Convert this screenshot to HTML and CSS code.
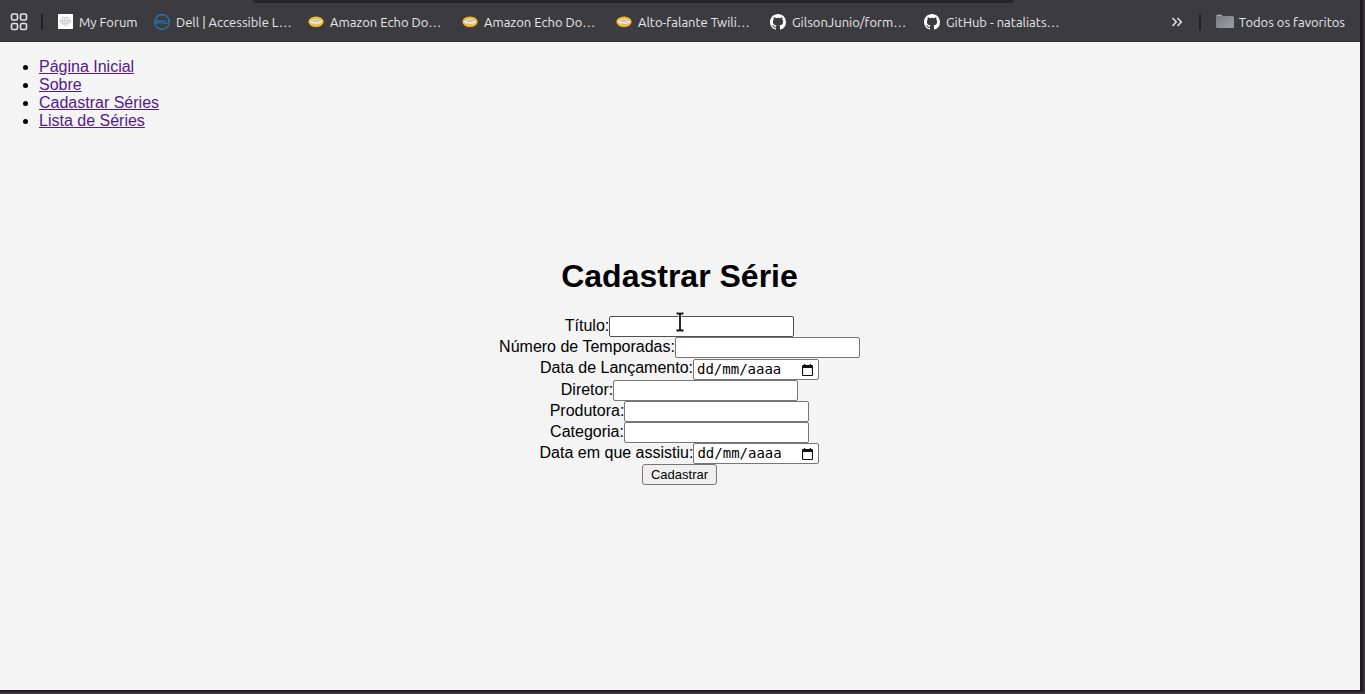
FILE: index.html
```html
<!DOCTYPE html>
<html lang="pt-BR">
<head>
<meta charset="utf-8">
<title>Cadastrar Série</title>
<link rel="stylesheet" href="styles.css">
</head>
<body>
<svg class="symbols" aria-hidden="true">
  <symbol id="handshake" viewBox="0 0 16 16">
    <ellipse cx="8" cy="8" rx="7.8" ry="5.5" fill="#4b4d57"/>
    <ellipse cx="8" cy="7.7" rx="7.6" ry="5.2" fill="#f5bd18"/>
    <path d="M1.500 6.500 5 5.600 8 5l3 .6 3.500.9-1.200 2.200-2.500 1.200L8 11l-2.600-1.100-2.600-1.200z" fill="#f2f2f4"/>
    <path d="m2.800 6.500 2.500.5L8 6.200l3 .3 2.200-.1M6 7.600l2-.4 3.500 1.800M5.200 9l2.800 1.500 1.800-.5" fill="none" stroke="#8a8c99" stroke-width=".6"/>
  </symbol>
  <symbol id="github" viewBox="0 0 16 16">
    <path fill="#fff" d="M8 0C3.58 0 0 3.58 0 8c0 3.54 2.29 6.53 5.47 7.59.4.07.55-.17.55-.38 0-.19-.01-.82-.01-1.49-2.01.37-2.53-.49-2.69-.94-.09-.23-.48-.94-.82-1.13-.28-.15-.68-.52-.01-.53.63-.01 1.08.58 1.23.82.72 1.21 1.87.87 2.33.66.07-.52.28-.87.51-1.07-1.78-.2-3.64-.89-3.64-3.95 0-.87.31-1.59.82-2.15-.08-.2-.36-1.02.08-2.12 0 0 .67-.21 2.2.82a7.6 7.6 0 0 1 4 0c1.53-1.04 2.2-.82 2.2-.82.44 1.1.16 1.92.08 2.12.51.56.82 1.27.82 2.15 0 3.07-1.87 3.75-3.65 3.95.29.25.54.73.54 1.48 0 1.07-.01 1.93-.01 2.2 0 .21.15.46.55.38A8.01 8.01 0 0 0 16 8c0-4.42-3.58-8-8-8z"/>
  </symbol>
  <symbol id="calendar" viewBox="0 0 11 12">
    <path fill="#111" d="M2 1V0h1.200v1h4.600V0H9v1h1q1 0 1 1v9q0 1-1 1H1q-1 0-1-1V2q0-1 1-1zM1.100 4v6.900h8.800V4z"/>
  </symbol>
</svg>
<div class="window">
  <header class="bookmarks">
    <button class="icon-button" aria-label="Aplicativos">
      <svg width="18" height="18" viewBox="0 0 18 18" fill="none" stroke="#e2e2e5" stroke-width="1.600"><rect x="1.500" y="1" width="6" height="6" rx="1.500"/><rect x="10.500" y="1" width="6" height="6" rx="1.500"/><rect x="1.500" y="10.500" width="6" height="6" rx="1.500"/><rect x="10.500" y="10.500" width="6" height="6" rx="1.500"/></svg>
    </button>
    <span class="divider"></span>
    <nav class="bookmark-list" aria-label="Favoritos">
      <a class="bookmark short" href="#"><svg class="icon" viewBox="0 0 16 16"><path fill="#fff" d="M0 0h16v16H0z"/><path d="M4 4h8M2 6.500h12M2 8.500h12M4 10.500h8" stroke="#8f90a0" stroke-width=".9" stroke-dasharray="1.500 .4"/><path d="M6 12.500h4" stroke="#c6c6d2" stroke-width=".7"/></svg><span>My Forum</span></a>
      <a class="bookmark" href="#"><svg class="icon" viewBox="0 0 16 16" fill="none" stroke="#2180c8"><circle cx="8" cy="8" r="7.300" stroke-width="1.200"/><path d="M2.700 6.300v3.400h1q1.500-.2 1.500-1.700t-1.500-1.700zm4.600-.2L5.200 8l2.100 2M6.300 8l1.800-1.600M6.800 9l2-1.600M9.700 6v3.600h1.700M12 6v3.600h1.700" stroke-width=".9"/></svg><span>Dell | Accessible L…</span></a>
      <a class="bookmark" href="#"><svg class="icon"><use href="#handshake"/></svg><span>Amazon Echo Do…</span></a>
      <a class="bookmark" href="#"><svg class="icon"><use href="#handshake"/></svg><span>Amazon Echo Do…</span></a>
      <a class="bookmark" href="#"><svg class="icon"><use href="#handshake"/></svg><span>Alto-falante Twili…</span></a>
      <a class="bookmark" href="#"><svg class="icon"><use href="#github"/></svg><span>GilsonJunio/form…</span></a>
      <a class="bookmark" href="#"><svg class="icon"><use href="#github"/></svg><span>GitHub - nataliats…</span></a>
    </nav>
    <button class="icon-button more" aria-label="Mais favoritos">
      <svg width="12" height="10" viewBox="0 0 12 10" fill="none" stroke="#e8e8ea" stroke-width="1.500"><path d="m1.500 1 3.800 4-3.800 4M6.500 1l3.800 4-3.800 4"/></svg>
    </button>
    <span class="divider"></span>
    <a class="bookmark all" href="#"><svg class="folder" viewBox="0 0 18 15"><defs><linearGradient id="fold" x2="1" y2="1"><stop stop-color="#77787d"/><stop offset="1" stop-color="#a0a1a7"/></linearGradient></defs><path d="M0 2Q0 .5 1.500.500h4L7 2h9.500Q18 2 18 3.500v9q0 1.500-1.500 1.500h-15Q0 14 0 12.500z" fill="url(#fold)"/><path d="M1 1.500h5" stroke="#a5a6aa"/></svg><span>Todos os favoritos</span></a>
  </header>
  <div class="page">
    <nav>
      <ul class="menu">
        <li><a href="#">Página Inicial</a></li>
        <li><a href="#">Sobre</a></li>
        <li><a href="#">Cadastrar Séries</a></li>
        <li><a href="#">Lista de Séries</a></li>
      </ul>
    </nav>
    <main class="content">
      <h1 class="title">Cadastrar Série</h1>
      <form class="form">
        <div class="row"><label for="titulo">Título:</label><span class="hovered"><input class="field" id="titulo" type="text"><svg class="pointer" viewBox="0 0 10 20" fill="none"><path d="M1.500 1.500h2.500l1 1 1-1h2.500M5 2.500v15M1.500 18.500h2.500l1-1 1 1h2.500" stroke="#fff" stroke-width="3"/><path d="M1.500 1.500h2.500l1 1 1-1h2.500M5 2.500v15M1.500 18.500h2.500l1-1 1 1h2.500" stroke="#111" stroke-width="1.800"/></svg></span></div>
        <div class="row"><label for="temporadas">Número de Temporadas:</label><input class="field" id="temporadas" type="text"></div>
        <div class="row date-row"><label for="lancamento">Data de Lançamento:</label><span class="date"><input class="date-text" id="lancamento" type="text" placeholder="dd/mm/aaaa"><button class="date-button" type="button" aria-label="Escolher data de lançamento"><svg width="11" height="12"><use href="#calendar"/></svg></button></span></div>
        <div class="row"><label for="diretor">Diretor:</label><input class="field" id="diretor" type="text"></div>
        <div class="row"><label for="produtora">Produtora:</label><input class="field" id="produtora" type="text"></div>
        <div class="row"><label for="categoria">Categoria:</label><input class="field" id="categoria" type="text"></div>
        <div class="row"><label for="assistiu">Data em que assistiu:</label><span class="date"><input class="date-text" id="assistiu" type="text" placeholder="dd/mm/aaaa"><button class="date-button" type="button" aria-label="Escolher data em que assistiu"><svg width="11" height="12"><use href="#calendar"/></svg></button></span></div>
        <button class="submit" type="submit">Cadastrar</button>
      </form>
    </main>
  </div>
</div>
</body>
</html>
```
FILE: styles.css
```css
* { box-sizing: border-box; }

body {
  margin: 0;
  min-height: 100vh;
  display: flex;
  background: #38363a;
  color: #000;
  font: 16px/18px "Liberation Sans", Arial, sans-serif;
}

.symbols { position: absolute; width: 0; height: 0; }

.window {
  flex: 1;
  display: flex;
  flex-direction: column;
  margin: 0 2px 2px 0;
  border: solid #1e1d24;
  border-width: 0 3px 2px 0;
  background: #f4f4f4;
}

.bookmarks {
  position: relative;
  display: flex;
  align-items: center;
  height: 42px;
  padding: 2px 15px 0 10px;
  border-bottom: 1px solid #302f34;
  background: #3c3b40;
}

/* Lower edge of the address bar */
.bookmarks::before {
  content: "";
  position: absolute;
  top: 0;
  left: 253px;
  right: 346px;
  height: 3px;
  border-radius: 0 0 4px 4px;
  background: #26252b;
}

.icon-button {
  display: flex;
  padding: 0;
  border: 0;
  background: none;
}

.divider {
  width: 2px;
  height: 16px;
  margin: 0 15px 0 13px;
  background: #222126;
}

.bookmark-list {
  flex: 1;
  display: flex;
  gap: 16px;
  min-width: 0;
  overflow: hidden;
}

.bookmark {
  flex: none;
  display: flex;
  align-items: center;
  gap: 6px;
  width: 138px;
  color: #e8e8ea;
  font: 13px/18px Ubuntu, "Noto Sans", sans-serif;
  text-decoration: none;
  white-space: nowrap;
}

.bookmark.short { width: 80px; }
.bookmark.all { width: auto; gap: 5px; }
.icon { flex: none; width: 16px; height: 16px; }
.short .icon { width: 15px; height: 15px; }
.folder { width: 18px; height: 15px; }
.more + .divider { margin-left: 16px; }

.page { flex: 1; }

.menu {
  margin: 0;
  padding: 16px 0 16px 39px;
}

.menu a { color: #551a8b; }

.content {
  padding: 112px 1px 32px 0;
  text-align: center;
}

.title {
  margin: 0 0 21px;
  font-size: 32px;
  line-height: 37px;
}

.form {
  display: flex;
  flex-direction: column;
  align-items: center;
}

.row { display: flex; height: 21px; line-height: 20px; }
.date-row { height: 22px; align-items: flex-end; }
.date-row label { align-self: flex-start; }

.hovered { position: relative; display: flex; }
.hovered .field { border-color: #4f4f4f; }

.pointer {
  position: absolute;
  left: 66px;
  top: -4px;
  width: 10px;
  height: 20px;
}

.field {
  width: 185px;
  height: 21px;
  padding: 1px 2px;
  border: 1px solid #767676;
  border-radius: 2px;
  background: #fff;
}

.date {
  display: flex;
  align-items: center;
  width: 126px;
  height: 21px;
  padding: 0 5px 0 3px;
  border: 1px solid #767676;
  border-radius: 2px;
  background: #fff;
}

.date-text {
  flex: 1;
  min-width: 0;
  padding: 0;
  border: 0;
  background: none;
  font: 14px/17px "DejaVu Sans Mono", monospace;
}

.date-text::placeholder { color: #000; opacity: 1; }

.date-button {
  display: flex;
  padding: 0;
  border: 0;
  background: none;
}

.submit {
  height: 21px;
  padding: 1px 8px;
  border: 1px solid #767676;
  border-radius: 3px;
  background: #efefef;
  color: #000;
  font: 13px/15px "Liberation Sans", Arial, sans-serif;
}
```
